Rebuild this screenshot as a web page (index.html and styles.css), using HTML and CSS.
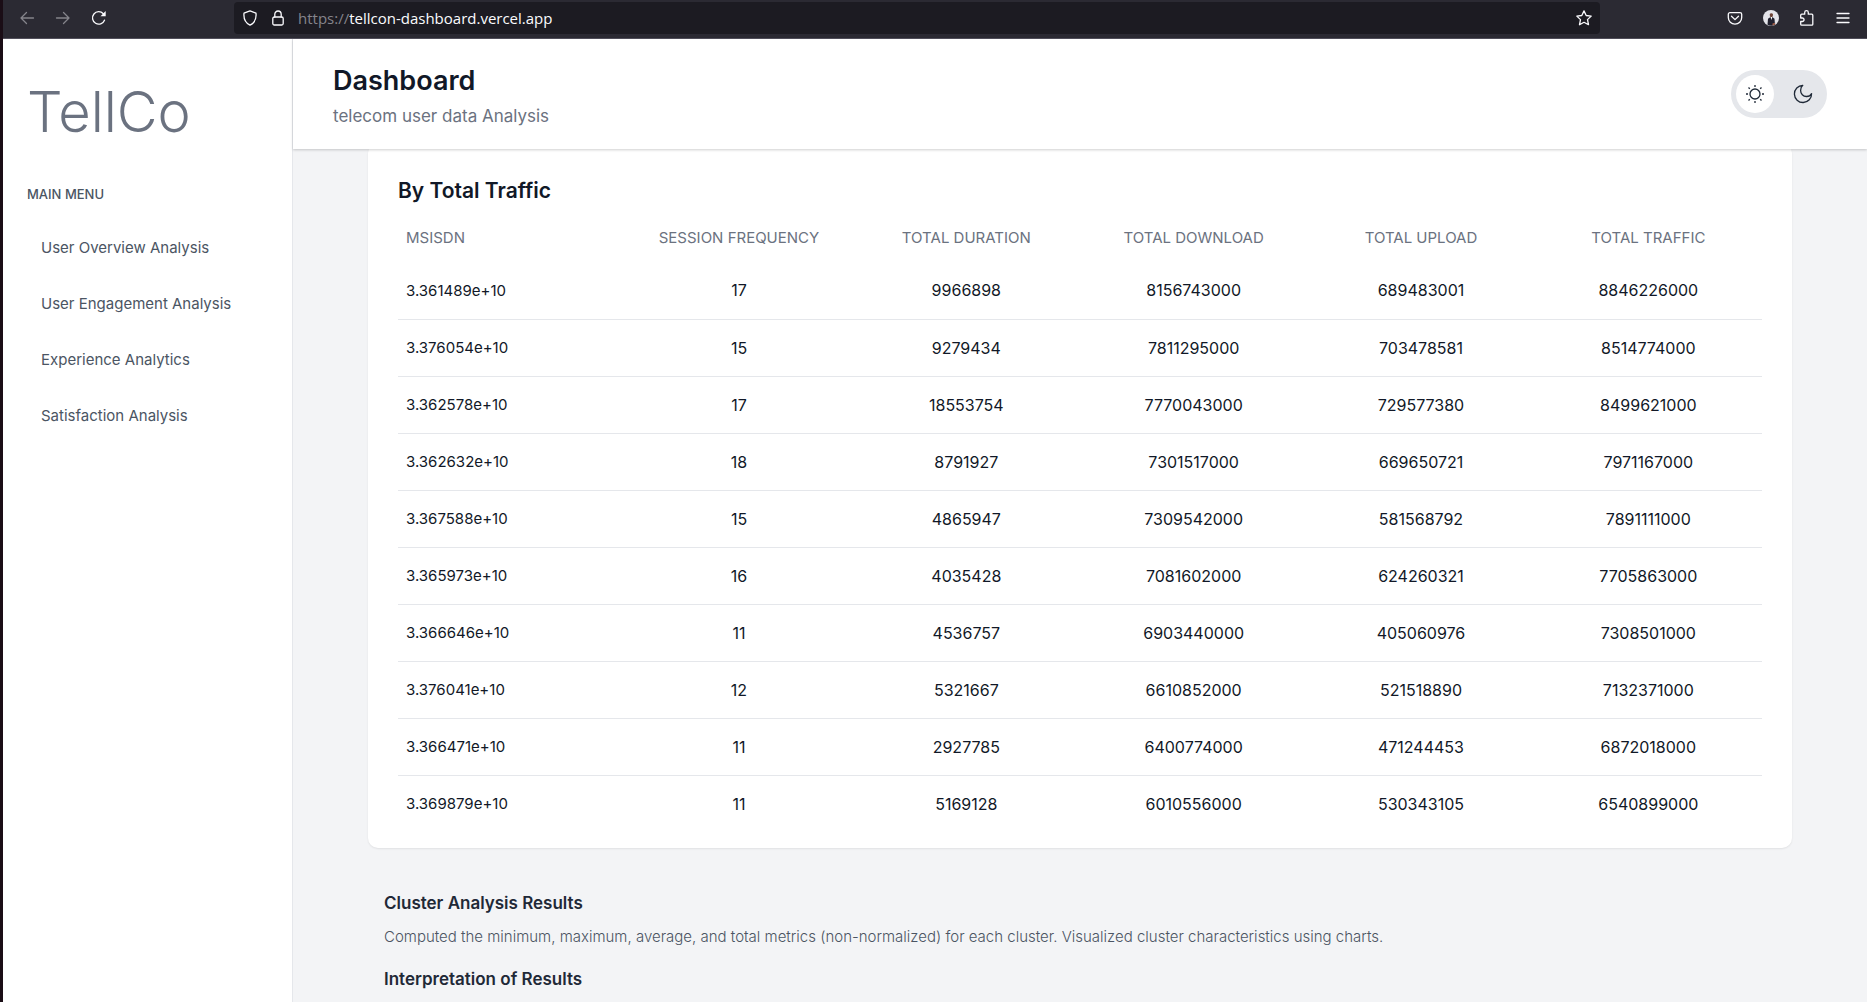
FILE: index.html
```html
<!DOCTYPE html>
<html lang="en">
<head>
<meta charset="utf-8">
<title>TellCo Dashboard</title>
<link rel="stylesheet" href="styles.css">
</head>
<body>
<div class="window">
  <div class="toolbar">
    <div class="tools tools-nav">
      <button class="tool dim" aria-label="Back"><svg width="16" height="16" viewBox="0 0 16 16"><path d="M14.5 8H2M7.5 2.500L2 8l5.500 5.500"/></svg></button>
      <button class="tool dim" aria-label="Forward"><svg width="16" height="16" viewBox="0 0 16 16"><path d="M1.500 8H14M8.500 2.500L14 8l-5.500 5.500"/></svg></button>
      <button class="tool" aria-label="Reload"><svg width="16" height="16" viewBox="0 0 16 16"><path d="M13.500 10.200A6.200 6.200 0 1 1 12.300 3.700"/><path class="solid" d="M14.700 1v5.200H9.500z"/></svg></button>
    </div>
    <div class="address">
      <svg width="16" height="16" viewBox="0 0 16 16"><path d="M8 .9l6 2.300c.5 5.200-1.400 9.700-6 12C3.400 12.900 1.500 8.400 2 3.200z"/></svg>
      <svg width="16" height="16" viewBox="0 0 16 16"><rect x="2.800" y="7" width="10.400" height="8" rx="1.500"/><path d="M4.800 7V4.200a3.200 3.200 0 0 1 6.400 0V7"/></svg>
      <label class="url"><span>https://</span><input type="text" aria-label="Address" value="tellcon-dashboard.vercel.app"></label>
      <button class="tool star" aria-label="Bookmark"><svg width="16" height="16" viewBox="0 0 16 16"><path d="M8 .9l2.200 4.600 5 .6-3.700 3.500 1 5.100L8 12.300l-4.500 2.400 1-5.100L.8 6.100l5-.6z"/></svg></button>
    </div>
    <div class="tools tools-end">
      <button class="tool" aria-label="Save to Pocket"><svg width="16" height="16" viewBox="0 0 16 16"><path d="M3 2.600h10a1.700 1.700 0 0 1 1.700 1.700v3.200a6.700 6.700 0 0 1-13.400 0V4.300A1.700 1.700 0 0 1 3 2.600zM4.500 6.300L8 9.600l3.500-3.300"/></svg></button>
      <button class="tool" aria-label="Account"><svg class="avatar" width="16" height="16" viewBox="0 0 16 16"><circle cx="8" cy="8" r="8" fill="#e4e4ea"/><path d="M4.500 14.700l.5-6 2.500-1.700h1.800l2.200 1.800.5 5.900A8 8 0 0 1 4.500 14.700z" fill="#20202e"/><path d="M6.700 4.500a1.700 1.700 0 0 1 3.300 0l-.3 2-1.300 1-1.400-1z" fill="#6b4033"/><path d="M7.500 7l.9 3L9.300 7z" fill="#fff"/><path d="M9.500 13.500l3-.8-.8 2-2.200.9z" fill="#a5604a"/></svg></button>
      <button class="tool" aria-label="Extensions"><svg width="16" height="16" viewBox="0 0 16 16"><path d="M1.700 8V5.200q0-1 1-1h3V2.500a1.800 1.800 0 0 1 3.600 0v1.700h3.500q1 0 1 1v9q0 1-1 1H2.700q-1 0-1-1v-2.700h1.600a1.750 1.750 0 0 0 0-3.500z"/></svg></button>
      <button class="tool" aria-label="Menu"><svg width="16" height="16" viewBox="0 0 16 16"><path d="M2 3.500h12M2 8h12M2 12.500h12"/></svg></button>
    </div>
  </div>

  <div class="app">
    <aside class="sidebar">
      <div class="logo">TellCo</div>
      <h2 class="menu-label">MAIN MENU</h2>
      <nav class="menu">
        <a href="#overview">User Overview Analysis</a>
        <a href="#engagement">User Engagement Analysis</a>
        <a href="#experience">Experience Analytics</a>
        <a href="#satisfaction">Satisfaction Analysis</a>
      </nav>
    </aside>

    <div class="content">
      <header class="header">
        <div>
          <h1>Dashboard</h1>
          <p>telecom user data Analysis</p>
        </div>
        <div class="theme">
          <button class="on" aria-label="Light theme"><svg width="20" height="20" viewBox="0 0 20 20"><circle cx="10" cy="10" r="5"/><path d="M10 1v2M10 17v2M1 10h2M17 10h2M3.500 3.500l1.300 1.300M15.200 15.200l1.300 1.300M16.500 3.500l-1.300 1.300M4.800 15.200l-1.300 1.300"/></svg></button>
          <button aria-label="Dark theme"><svg width="20" height="20" viewBox="0 0 20 20"><path d="M9.800 1.300A8.600 8.600 0 1 0 18.600 9.600Q17 12.600 13.400 12.500A5.900 5.900 0 0 1 7.600 6.600Q7.600 3 9.800 1.300z"/></svg></button>
        </div>
      </header>

      <main class="page">
        <section class="card">
          <h2>By Total Traffic</h2>
          <table>
            <thead>
              <tr><th>MSISDN</th><th>SESSION FREQUENCY</th><th>TOTAL DURATION</th><th>TOTAL DOWNLOAD</th><th>TOTAL UPLOAD</th><th>TOTAL TRAFFIC</th></tr>
            </thead>
            <tbody>
              <tr><td>3.361489e+10</td><td>17</td><td>9966898</td><td>8156743000</td><td>689483001</td><td>8846226000</td></tr>
              <tr><td>3.376054e+10</td><td>15</td><td>9279434</td><td>7811295000</td><td>703478581</td><td>8514774000</td></tr>
              <tr><td>3.362578e+10</td><td>17</td><td>18553754</td><td>7770043000</td><td>729577380</td><td>8499621000</td></tr>
              <tr><td>3.362632e+10</td><td>18</td><td>8791927</td><td>7301517000</td><td>669650721</td><td>7971167000</td></tr>
              <tr><td>3.367588e+10</td><td>15</td><td>4865947</td><td>7309542000</td><td>581568792</td><td>7891111000</td></tr>
              <tr><td>3.365973e+10</td><td>16</td><td>4035428</td><td>7081602000</td><td>624260321</td><td>7705863000</td></tr>
              <tr><td>3.366646e+10</td><td>11</td><td>4536757</td><td>6903440000</td><td>405060976</td><td>7308501000</td></tr>
              <tr><td>3.376041e+10</td><td>12</td><td>5321667</td><td>6610852000</td><td>521518890</td><td>7132371000</td></tr>
              <tr><td>3.366471e+10</td><td>11</td><td>2927785</td><td>6400774000</td><td>471244453</td><td>6872018000</td></tr>
              <tr><td>3.369879e+10</td><td>11</td><td>5169128</td><td>6010556000</td><td>530343105</td><td>6540899000</td></tr>
            </tbody>
          </table>
        </section>
        <section class="notes">
          <h3>Cluster Analysis Results</h3>
          <p>Computed the minimum, maximum, average, and total metrics (non-normalized) for each cluster. Visualized cluster characteristics using charts.</p>
          <h3>Interpretation of Results</h3>
        </section>
      </main>
    </div>
  </div>
</div>
</body>
</html>
```
FILE: styles.css
```css
* { box-sizing: border-box; margin: 0; padding: 0; }

body {
  height: 100vh;
  overflow: hidden;
  background: #1a0d16;
  color: #111827;
  font-family: Inter, "Liberation Sans", sans-serif;
}

button { border: 0; background: none; color: inherit; cursor: pointer; }
svg { display: block; fill: none; stroke: currentColor; flex: none; }

.window {
  display: flex;
  flex-direction: column;
  height: 100%;
  margin-left: 3px;
}

/* Browser toolbar */
.toolbar {
  display: flex;
  align-items: center;
  flex: none;
  height: 39px;
  padding-bottom: 2px;
  background: #2b2a33;
  border-bottom: 1px solid #52505c;
  color: #fbfbfe;
}
.toolbar svg { stroke-width: 1.3; stroke-linejoin: round; stroke-linecap: round; }
.toolbar .avatar { stroke: none; }
.toolbar .solid { fill: currentColor; stroke: none; }
.tools { display: flex; gap: 20px; }
.tools-nav { width: 231px; padding-left: 16px; }
.tools-end { width: 267px; padding-right: 16px; justify-content: flex-end; }
.tool { width: 16px; height: 16px; }
.tool.dim { color: #85848b; }
.address {
  display: flex;
  flex: 1;
  align-items: center;
  gap: 12px;
  height: 32px;
  padding: 0 8px;
  background: #1c1b22;
  border-radius: 4px;
}
.url {
  display: flex;
  flex: 1;
  color: #85848b;
  font: 15px/20px "Open Sans", sans-serif;
}
.url input {
  flex: 1;
  border: 0;
  outline: 0;
  background: none;
  color: #fbfbfe;
  font: inherit;
}

/* Application shell */
.app { display: flex; flex: 1; min-height: 0; }
.sidebar {
  flex: none;
  width: 290px;
  padding: 37px 24px;
  background: #fff;
  border-right: 1px solid #e5e7eb;
  color: #4b5563;
}
.logo { font-size: 56px; line-height: 72px; font-weight: 300; color: #6b7280; }
.menu-label { margin-top: 36px; font-size: 13px; line-height: 20px; font-weight: 500; }
.menu { display: flex; flex-direction: column; gap: 8px; margin-top: 20px; }
.menu a {
  padding: 12px 14px;
  color: inherit;
  font-size: 15px;
  line-height: 24px;
  font-weight: 400;
  text-decoration: none;
}

.content { display: flex; flex: 1; flex-direction: column; min-width: 0; background: #f3f4f6; }
.header {
  position: relative;
  z-index: 1;
  display: flex;
  flex: none;
  align-items: center;
  justify-content: space-between;
  height: 110px;
  padding: 0 40px;
  background: #fff;
  box-shadow: 0 1px 3px rgba(0, 0, 0, .12), 0 1px 2px rgba(0, 0, 0, .08);
}
.header h1 { font-size: 27px; line-height: 40px; font-weight: 600; }
.header p { margin-top: 3px; font-size: 17px; line-height: 24px; color: #6b7280; }
.theme { display: flex; gap: 10px; padding: 5px; border-radius: 24px; background: #e5e7eb; color: #1f2937; }
.theme button { display: grid; place-items: center; width: 38px; height: 38px; border-radius: 50%; }
.theme .on { background: #fff; }
.theme svg { stroke-width: 1.3; stroke-linejoin: round; }

.page { flex: 1; min-height: 0; margin-top: -6px; padding: 0 75px; overflow: hidden; }
.card {
  padding: 33px 30px 16px;
  border-radius: 10px;
  background: #fff;
  box-shadow: 0 1px 2px rgba(0, 0, 0, .08);
}
.card h2 { font-size: 21px; line-height: 30px; font-weight: 600; }
table { width: 100%; margin-top: 7px; border-collapse: collapse; table-layout: fixed; }
th { height: 49px; font-size: 15px; font-weight: 400; color: #6b7280; }
td { height: 57px; font-size: 16px; text-align: center; }
th:first-child, td:first-child { padding-left: 8px; text-align: left; }
td:first-child { font-size: 15px; }
tbody tr { border-bottom: 1px solid #e5e7eb; }
tbody tr:last-child { border-bottom: 0; }

.notes { padding: 43px 16px; }
.notes h3 { font-size: 17px; line-height: 24px; font-weight: 600; color: #1f2937; }
.notes p { margin: 10px 0 18px; font-size: 15px; line-height: 24px; font-weight: 300; color: #4b5563; }
```
